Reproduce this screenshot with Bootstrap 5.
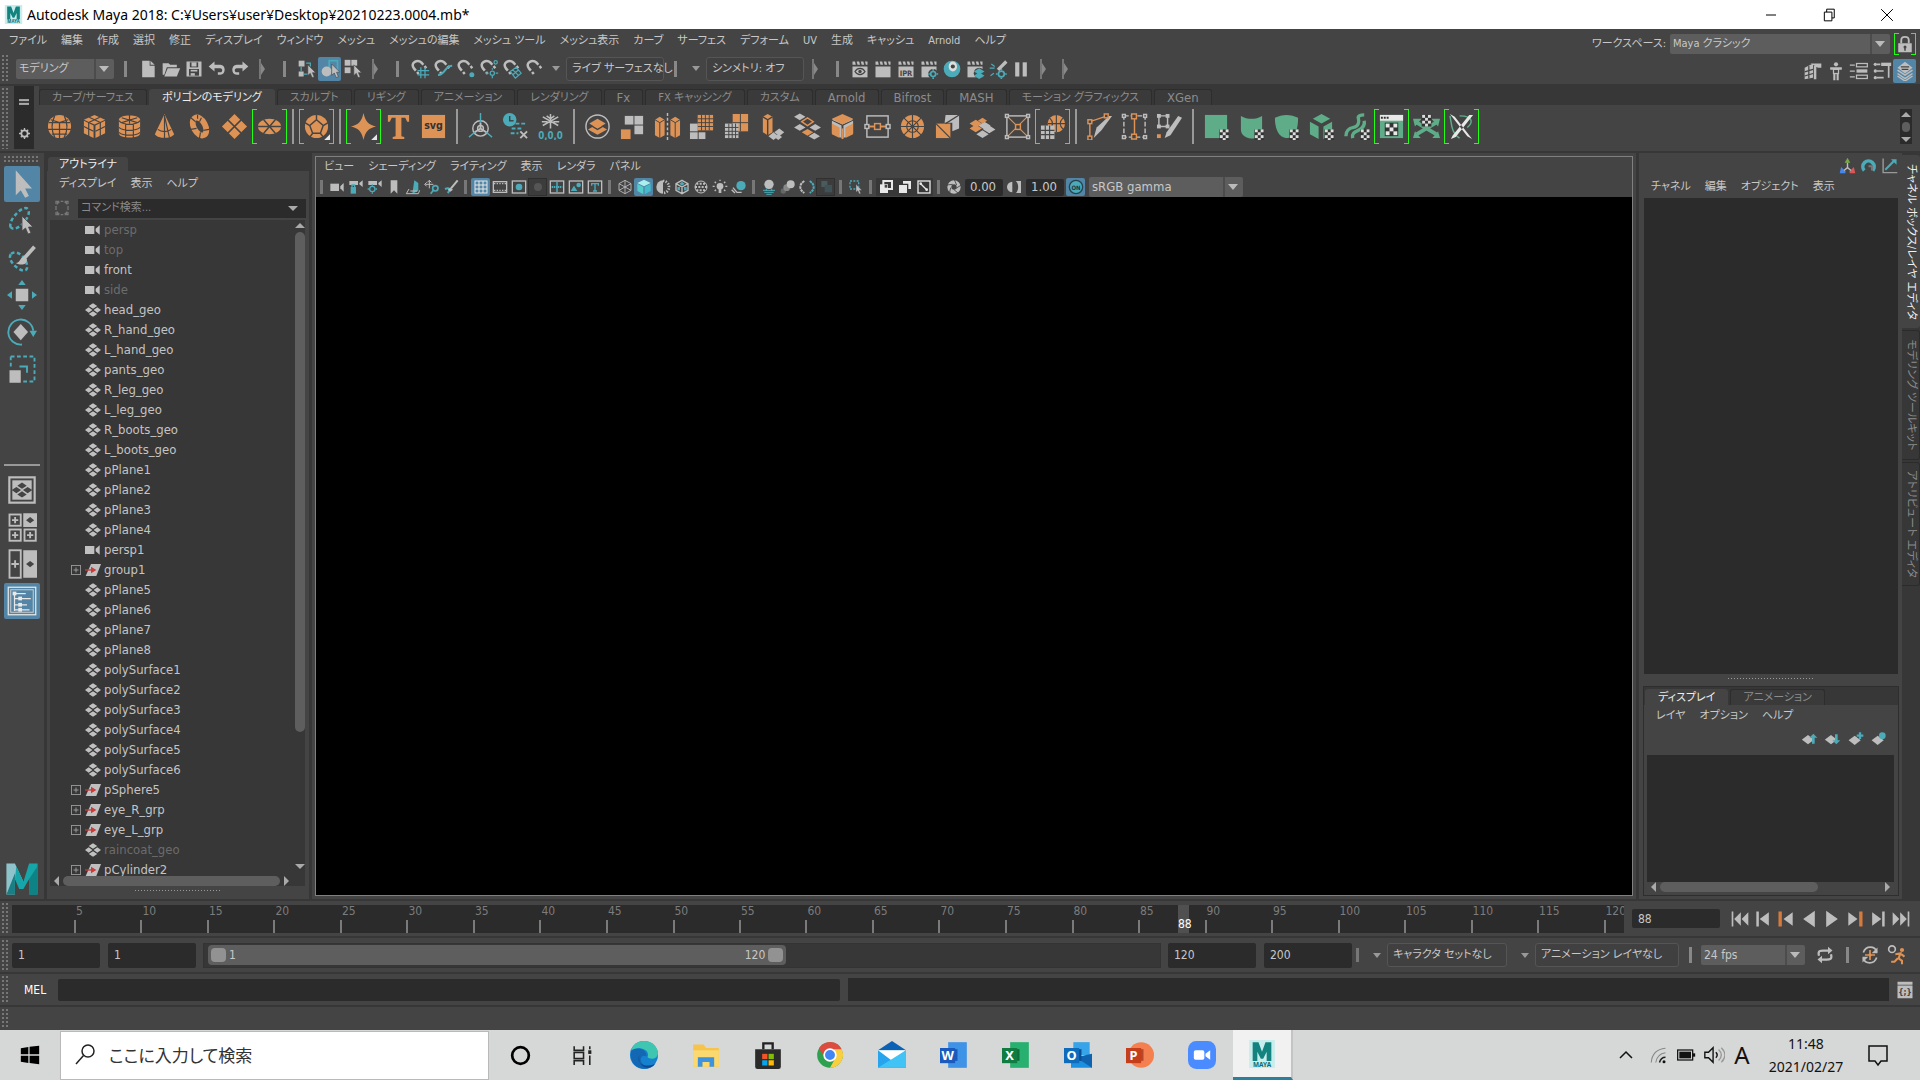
<!DOCTYPE html>
<html lang="ja">
<head>
<meta charset="utf-8">
<meta name="viewport" content="width=device-width, initial-scale=1">
<title>Autodesk Maya 2018</title>
<link rel="stylesheet" href="https://cdn.jsdelivr.net/npm/bootstrap@5.3.0/dist/css/bootstrap.min.css">
<style>
:root{--bg:#444;--dark:#373737;--deep:#2b2b2b;--ctl:#5d5d5d;--blue:#5285a6;--txt:#c8c8c8}
body{font-family:"DejaVu Sans Condensed","Noto Sans","Noto Sans CJK JP",sans-serif;font-size:11px;line-height:20px;color:var(--txt);background:var(--bg);font-feature-settings:"palt";overflow:hidden;white-space:nowrap}
button{background:none;border:0;padding:0;color:inherit;font-feature-settings:inherit;display:inline-flex;align-items:center;justify-content:center;flex:none}
svg{display:block;flex:none}
input,select{font:inherit;font-feature-settings:inherit;color:var(--txt);background:var(--deep);border:0;border-radius:2px;padding:0 6px;min-width:0;outline:0}
a{color:inherit;text-decoration:none}
.en{font-size:13px}
.titlebar{height:29px;background:#fff;color:#000;font-family:"Noto Sans","Noto Sans CJK JP",sans-serif;font-size:14px}
.titlebar button{width:58px;height:29px}
.menus{display:flex;gap:14px;align-items:center}
.mainmenu{height:24px;padding-left:9px}
.statusbar{height:31px}
.line{height:2px;background:var(--dark);flex:none}
.gripv{width:6px;margin:2px 4px 2px 2px;flex:none;background:radial-gradient(circle at 1px 1px,#777 1px,transparent 1px) 0 0/4px 4px}
.griph{height:6px;background:radial-gradient(circle at 1px 1px,#777 1px,transparent 1px) 0 0/4px 4px}
.dots{width:86px;height:1px;background:repeating-linear-gradient(90deg,#999 0 1px,transparent 1px 3px);margin:0 auto}
.pick{position:relative;display:flex;height:20px;background:var(--ctl);border-radius:2px;flex:none}
.pick select{appearance:none;background:none;width:100%;padding:0 22px 0 3px;height:20px;line-height:20px}
.pick::after{content:"";position:absolute;right:5px;top:7px;border:5px solid transparent;border-top:6px solid #bbb;border-bottom:0;pointer-events:none}
.pick::before{content:"";position:absolute;right:18px;top:0;bottom:0;width:2px;background:#4c4c4c}
.w98{width:98px}.w104{width:104px}.w120{width:120px}.w144{width:144px}.w154{width:154px}.w220{width:220px}
.t23{width:23px;height:24px}
.on{background:var(--blue);border-radius:2px}
.sep{width:22px;height:22px;display:flex;justify-content:center;align-items:center;flex:none}
.sep::before{content:"";width:2px;height:20px;background:#777}
.sep.knob::before{width:3px;height:16px;background:#888}
.sep.fold::after{content:"";border:6px solid transparent;border-left:4px solid #888;border-right:0}
.framed{height:24px;border:1px solid #555;background:#404040;border-radius:3px;padding:0 5px;line-height:20px;flex:none;justify-content:flex-start}
.tri{border:4px solid transparent;border-top:5px solid #999;border-bottom:0}
.narrowbtn{width:20px;height:22px}
.lockbtn{width:22px;height:22px}
.brk{position:relative}
.brk::before,.brk::after{content:"";position:absolute;top:0;bottom:0;width:5px;border:1px solid #2f1;pointer-events:none}
.brk::before{left:0;border-right:0}.brk::after{right:0;border-left:0}
.shelf{height:65px;background:var(--bg)}
.shelfside{width:20px;background:var(--deep);flex:none;margin:0 5px 2px 2px}
.shelftabs{height:19px;background:var(--dark);padding-top:3px;gap:2px}
.shelftabs button,.laytabs button{height:16px;padding:0 12px;color:#8c8c8c;border:1px solid #2d2d2d;border-bottom:0;border-radius:3px 3px 0 0;background:#3a3a3a}
.shelftabs button.cur,.laytabs button.cur{background:var(--bg);color:#eee;border-color:var(--bg)}
.shelfrow{height:46px;padding:4px 0 0 3px}
.cell{width:35px;height:35px}
.ssep{width:12px;height:35px;flex:none;display:flex;justify-content:center}
.ssep::before{content:"";width:2px;background:#999}
.shelfscroll{width:12px;height:35px;background:var(--deep);margin:0 8px 0 0}
.toolbox{width:44px;flex:none;padding:3px 4px 3px}
.tool{width:36px;height:36px;margin-bottom:1px}
.layouts{margin-top:76px;border-top:2px solid #999;padding-top:6px}
.vbar{width:3px;background:var(--dark);flex:none}
.outliner{width:262px;flex:none}
.outstrip{background:var(--dark);height:18px;padding:2px 0 0 1px}
.outstrip button{height:16px;width:80px;background:var(--bg);color:#eee;border-radius:3px 3px 0 0}
.panelmenu{height:24px;padding-top:2px}
.finder{padding:4px 0 0 7px}
.find{height:19px;background:var(--deep);width:228px}
.find input{width:100%;height:19px;padding:0 3px}
.find input::placeholder{color:#8a8a8a;opacity:1}
.tree{background:var(--dark);margin:2px 4px 0 3px;min-height:0}
.tree li{height:20px;display:flex;align-items:center;padding-left:21px;color:#c4c4c4;line-height:20px;font-size:13px}
.tree li.off{color:#6c6c6c}
.xp{width:10px;margin-right:4px;flex:none}
.ticon{width:16px;margin-right:3px;flex:none}
.vscroll{width:10px;flex:none;padding:3px 0}
.hthumb,.vthumb{background:#5e5e5e;border-radius:5px}
.hthumb{height:10px}.vthumb{width:10px;height:77%}
.twothird{width:66%}
.up{border:5px solid transparent;border-bottom:5px solid #aaa;border-top:0;width:0;height:0}
.down{border:5px solid transparent;border-top:5px solid #aaa;border-bottom:0;width:0;height:0}
.lf{border:5px solid transparent;border-right:5px solid #aaa;border-left:0;width:0;height:0}
.rt{border:5px solid transparent;border-left:5px solid #aaa;border-right:0;width:0;height:0}
.view{border:1px solid #808080;margin:3px;min-width:0}
.view .menus{height:20px;padding-left:8px}
.vtools{height:20px}
.t19{width:19px;height:18px}
.vsep{width:11px;height:18px;flex:none;display:flex;justify-content:center;align-items:center}
.vsep::before{content:"";width:3px;height:14px;background:#777}
.press{background:#3c3c3c;border:1px solid #303030}
.dk{background:#383838}
.vtools input{width:38px;height:17px;padding:0 5px;margin:0 2px}
.stage{background:#000;flex:1}
.chan{width:263px;flex:none}
.well{background:var(--deep)}
.chanbox{margin:0 4px 0 5px;height:476px}
.lay{border:1px solid #2e2e2e;margin:7px 3px 3px 4px}
.laytabs{height:18px;background:var(--dark);padding:2px 0 0 1px;gap:2px}
.laymenu{height:22px}
.laybody{margin:0 4px 3px 3px}
.sidetabs{width:18px;background:var(--dark);flex:none;gap:2px;padding-top:2px}
.sidetabs button{width:18px;line-height:18px;color:#8c8c8c;border:1px solid #2b2b2b;border-left:0;border-radius:0 3px 3px 0}
.sidetabs button.cur{background:var(--bg);color:#f0f0f0;border-color:var(--bg)}
.sidetabs span{flex:none;transform:rotate(90deg)}
.tall{height:173px}.mid{height:130px}.low{height:124px}
.timerow{height:35px}.rangerow{height:34px}.cmdrow{height:31px}.helprow{height:23px}
.timerow,.rangerow,.cmdrow{font-size:12px}
.times{position:relative;height:28px;background:var(--deep);overflow:hidden;color:#7c7c7c}
.tick{position:absolute;top:15px;bottom:0;width:2px;background:#7a7a7a}
.tlab{position:absolute;top:0;line-height:13px;padding-left:2px}
.now{position:absolute;top:0;bottom:0;width:11px;background:#505050;color:#fff;line-height:38px}
.num{width:88px;height:25px;flex:none}
.num.short{height:19px}
.range{height:25px;background:var(--dark);border:1px solid #333;padding:1px 4px;margin:0 7px}
.rthumb{width:61%;height:20px;background:#5e5e5e;border-radius:4px;padding:0 3px;gap:3px}
.knobb{width:15px;height:14px;border-radius:4px;background:#929292}
.rangerow .framed{font-size:11px}
.mel{width:782px;height:22px}
.taskbar{height:50px;background:#d6d7d7;color:#111;font-family:"Noto Sans","Noto Sans CJK JP",sans-serif}
.winsearch{width:429px;height:49px;background:#fff;border:1px solid #b9b9b9}
.winsearch input{background:none;font-size:17px;color:#333;width:300px;padding:0;height:40px}
.winsearch input::placeholder{color:#333;opacity:1}
.tb{width:62px;height:50px}
.tb.start{width:60px}
.tb.cur{background:#f1f1f1;border-bottom:3px solid #2e7f9b;border-right:2px solid #c4c4c4;width:60px}
.tray{gap:8px}
.tray button{width:20px;height:50px}
.clock{width:92px;text-align:center;font-size:14px;line-height:23px}
</style>
</head>
<body class="d-flex flex-column vh-100">
<header class="titlebar d-flex align-items-center flex-shrink-0">
  <span data-i="maya" data-s="19" class="ms-1 me-1"></span><span>Autodesk Maya 2018: C:¥Users¥user¥Desktop¥20210223.0004.mb*</span>
  <div class="ms-auto d-flex pe-1">
    <button aria-label="最小化" data-i="min" data-s="12"></button><button aria-label="元に戻す" data-i="rest" data-s="14"></button><button aria-label="閉じる" data-i="close" data-s="14"></button>
  </div>
</header>

<div class="d-flex flex-shrink-0">
<div class="flex-grow-1">
<nav class="mainmenu menus"><a href="#">ファイル</a><a href="#">編集</a><a href="#">作成</a><a href="#">選択</a><a href="#">修正</a><a href="#">ディスプレイ</a><a href="#">ウィンドウ</a><a href="#">メッシュ</a><a href="#">メッシュの編集</a><a href="#">メッシュ ツール</a><a href="#">メッシュ表示</a><a href="#">カーブ</a><a href="#">サーフェス</a><a href="#">デフォーム</a><a href="#">UV</a><a href="#">生成</a><a href="#">キャッシュ</a><a href="#">Arnold</a><a href="#">ヘルプ</a></nav>
<div class="statusbar d-flex align-items-center">
  <div class="gripv align-self-stretch"></div>
  <div class="pick w98 ms-1"><select aria-label="メニュー セット"><option>モデリング</option></select></div>
  <span class="sep knob"></span>
  <span class="d-flex" data-row="t23:new,open,save,undo,redo"></span>
  <span class="sep fold"></span><span class="sep knob"></span>
  <span class="d-flex" data-row="t23:selh,selo*,selc"></span>
  <span class="sep fold"></span><span class="sep knob"></span>
  <span class="d-flex" data-row="t23:maggrid,magcurve,magpt,magproj,magplane,maglive"></span>
  <button class="narrowbtn" aria-label="ライブ"><i class="tri"></i></button>
  <button class="framed w98">ライブ サーフェスなし</button>
  <span class="sep knob"></span>
  <button class="narrowbtn" aria-label="シンメトリ"><i class="tri"></i></button>
  <button class="framed w98">シンメトリ: オフ</button>
  <span class="sep fold"></span><span class="sep knob"></span>
  <span class="d-flex" data-row="t23:clapeye,clap,clapipr,clapgear,ball,claplay,dial,pause"></span>
  <span class="sep fold"></span><span class="sep fold"></span>
</div>
</div>
<div class="d-flex flex-column align-items-end pt-1 pe-1">
  <div class="d-flex align-items-center gap-1"><label for="ws">ワークスペース:</label><div class="pick w220"><select id="ws"><option>Maya クラシック</option></select></div><button class="lockbtn brk" aria-label="ロック" data-i="lock" data-s="18"></button></div>
  <div class="d-flex mt-1" data-row="t23:hammer,man,attr,toolset,layers*"></div>
</div>
</div>
<div class="line"></div>

<section class="shelf d-flex flex-shrink-0">
  <div class="gripv"></div>
  <div class="shelfside d-flex flex-column align-items-center justify-content-around"><button aria-label="シェルフ メニュー" data-i="burger" data-s="10"></button><button aria-label="シェルフ設定" data-i="gear" data-s="11"></button></div>
  <div class="flex-grow-1">
    <div class="shelftabs d-flex"><button>カーブ/サーフェス</button><button class="cur">ポリゴンのモデリング</button><button>スカルプト</button><button>リギング</button><button>アニメーション</button><button>レンダリング</button><button class="en">Fx</button><button>FX キャッシング</button><button>カスタム</button><button class="en">Arnold</button><button class="en">Bifrost</button><button class="en">MASH</button><button>モーション グラフィックス</button><button class="en">XGen</button></div>
    <div class="shelfrow d-flex">
      <div class="d-flex" id="shelf"></div>
      <div class="shelfscroll ms-auto d-flex flex-column align-items-center justify-content-around"><i class="up"></i><i class="hthumb p-1"></i><i class="down"></i></div>
    </div>
  </div>
</section>
<div class="line"></div>

<main class="d-flex flex-grow-1 overflow-hidden">
  <aside class="toolbox d-flex flex-column">
    <div class="griph mb-1"></div>
    <div class="d-flex flex-column" data-row="tool:select*,lasso,paint,move,rotate,scale"></div>
    <div class="layouts d-flex flex-column" data-row="tool:lay1,lay2,lay3,lay4*"></div>
    <div class="mt-auto d-flex justify-content-center" data-i="m" data-s="34"></div>
  </aside>
  <div class="vbar"></div>
  <section class="outliner d-flex flex-column">
    <div class="outstrip"><button>アウトライナ</button></div>
    <nav class="menus panelmenu ps-2 ms-1"><a href="#">ディスプレイ</a><a href="#">表示</a><a href="#">ヘルプ</a></nav>
    <div class="finder d-flex align-items-center"><span data-i="filter" data-s="16" class="me-2"></span><div class="find d-flex align-items-center"><input aria-label="コマンド検索" placeholder="コマンド検索..."><i class="down me-2"></i></div></div>
    <div class="tree d-flex flex-column flex-grow-1">
      <div class="d-flex flex-grow-1 overflow-hidden"><ul class="list-unstyled mb-0 flex-grow-1" id="tree"></ul>
        <div class="vscroll d-flex flex-column gap-1"><i class="up"></i><div class="vthumb"></div><i class="down mt-auto mb-1"></i></div></div>
      <div class="d-flex align-items-center gap-1 ps-1 pe-3"><i class="lf"></i><div class="hthumb flex-grow-1"></div><i class="rt"></i></div>
    </div>
    <div class="dots mt-1 mb-2"></div>
  </section>
  <div class="vbar"></div>
  <section class="view d-flex flex-column flex-grow-1">
    <nav class="menus"><a href="#">ビュー</a><a href="#">シェーディング</a><a href="#">ライティング</a><a href="#">表示</a><a href="#">レンダラ</a><a href="#">パネル</a></nav>
    <div class="vtools d-flex align-items-center">
      <span class="vsep"></span><span class="d-flex" data-row="t19:cam,camlock,camgear,bookmark,imgplane,panzoom,grease"></span>
      <span class="vsep"></span><span class="d-flex" data-row="t19:grid*,film,res,mask!,field,safe,title"></span>
      <span class="vsep"></span><span class="d-flex" data-row="t19:wire,shaded*,deflt,wsh,texd,bulb,shadow"></span>
      <span class="vsep"></span><span class="d-flex" data-row="t19:ao,mblur,aa,dof!"></span>
      <span class="vsep"></span><span class="d-flex" data-row="t19:isol"></span>
      <span class="vsep"></span><span class="d-flex" data-row="t19:xray,xray2,xjoint"></span>
      <span class="vsep"></span><button class="t19" aria-label="露出" data-i="aperture" data-s="16"></button><input class="en" aria-label="露出値" value="0.00">
      <button class="t19" aria-label="ガンマ" data-i="gamma" data-s="16"></button><input class="en" aria-label="ガンマ値" value="1.00">
      <button class="t19 on" aria-label="カラー管理" data-i="onb" data-s="16"></button><div class="pick w154 ms-1"><select class="en" aria-label="ビュー変換"><option>sRGB gamma</option></select></div>
    </div>
    <div class="stage"></div>
  </section>
  <div class="vbar"></div>
  <aside class="chan d-flex flex-column">
    <div class="d-flex justify-content-end pt-1 pe-1 gap-1"><button aria-label="軸" data-i="axis" data-s="17"></button><button aria-label="速度" data-i="speedo" data-s="17"></button><button aria-label="グラフ" data-i="graph" data-s="17"></button></div>
    <nav class="menus panelmenu ms-2 ps-1"><a href="#">チャネル</a><a href="#">編集</a><a href="#">オブジェクト</a><a href="#">表示</a></nav>
    <div class="well chanbox"></div>
    <div class="dots mt-1"></div>
    <div class="lay d-flex flex-column flex-grow-1">
      <div class="laytabs d-flex"><button class="cur">ディスプレイ</button><button>アニメーション</button></div>
      <nav class="menus laymenu ps-2 ms-1"><a href="#">レイヤ</a><a href="#">オプション</a><a href="#">ヘルプ</a></nav>
      <div class="d-flex justify-content-end pe-2 pb-1" data-row="lt:layup,laydown,layadd,laysel"></div>
      <div class="laybody d-flex flex-column flex-grow-1"><div class="well flex-grow-1"></div><div class="d-flex align-items-center gap-1 p-1 py-0"><i class="lf"></i><div class="hthumb twothird me-auto"></div><i class="rt"></i></div></div>
    </div>
  </aside>
  <div class="sidetabs d-flex flex-column"><button class="cur tall"><span>チャネル ボックス/レイヤ エディタ</span></button><button class="mid"><span>モデリング ツールキット</span></button><button class="low"><span>アトリビュート エディタ</span></button></div>
</main>

<div class="line"></div>
<section class="timerow d-flex align-items-center flex-shrink-0">
  <div class="gripv align-self-stretch"></div>
  <div class="times flex-grow-1" id="times"></div>
  <input class="num short ms-2" aria-label="現在のフレーム" value="88">
  <div class="d-flex ms-2 me-2" data-row="t23:p1,p2,p3,p4,p5,p6,p7,p8"></div>
</section>
<div class="line"></div>
<section class="rangerow d-flex align-items-center flex-shrink-0 pe-1">
  <div class="gripv align-self-stretch me-1"></div>
  <input class="num me-2" aria-label="開始" value="1"><input class="num" aria-label="再生開始" value="1">
  <div class="range flex-grow-1"><div class="rthumb d-flex align-items-center"><i class="knobb"></i><span>1</span><span class="ms-auto">120</span><i class="knobb"></i></div></div>
  <input class="num me-2" aria-label="再生終了" value="120"><input class="num" aria-label="終了" value="200">
  <span class="vsep"></span>
  <button class="narrowbtn ms-1" aria-label="キャラクタ"><i class="tri"></i></button><button class="framed w120 me-2">キャラクタ セットなし</button>
  <button class="narrowbtn" aria-label="レイヤ"><i class="tri"></i></button><button class="framed w144">アニメーション レイヤなし</button>
  <span class="sep knob"></span>
  <div class="pick w104"><select aria-label="フレームレート"><option>24 fps</option></select></div>
  <button class="t23 ms-2" aria-label="ループ" data-i="loop" data-s="18"></button><span class="sep knob"></span>
  <button class="t23 me-1" aria-label="自動キー" data-i="autokey" data-s="20"></button><button class="t23 me-2" aria-label="プリファレンス" data-i="runner" data-s="20"></button>
</section>
<div class="line"></div>
<section class="cmdrow d-flex align-items-center flex-shrink-0">
  <div class="gripv align-self-stretch me-3"></div>
  <label for="mel" class="me-2 text-white">MEL</label><input id="mel" class="mel ms-1">
  <div class="well flex-grow-1 ms-2 h-75"></div>
  <button class="t23 mx-1" aria-label="スクリプト エディタ" data-i="script" data-s="18"></button>
</section>
<div class="line"></div>
<div class="helprow d-flex flex-shrink-0"><div class="gripv"></div></div>

<footer class="taskbar d-flex align-items-center flex-shrink-0">
  <button class="tb start" aria-label="スタート" data-i="win" data-s="20"></button>
  <div class="winsearch d-flex align-items-center ps-2"><span data-i="search" data-s="24" class="ms-1 me-2"></span><input class="ms-1" aria-label="検索" placeholder="ここに入力して検索"></div>
  <div class="d-flex" data-row="tb:cortana,task,edge,folder,store,chrome,mail,word,excel,outlook,ppt,zoom,maya*"></div>
  <div class="tray d-flex align-items-center ms-auto pe-2">
    <button aria-label="隠れているインジケーター" data-i="chev" data-s="18"></button><button class="ms-1" aria-label="Wi-Fi" data-i="wifi" data-s="18"></button><button aria-label="バッテリー" data-i="batt" data-s="20"></button><button aria-label="音量" data-i="vol" data-s="22"></button><button class="fs-4" aria-label="入力モード">A</button>
    <div class="clock">11:48<br>2021/02/27</div>
    <button class="ms-2 me-4" aria-label="通知" data-i="note" data-s="24"></button>
  </div>
</footer>

<script>
// Small colour names keep the drawings short
const G='#bdbdbd',T='#4babb9',O='#dd9256',E='#5fad88',B='#444';
const p=(d,f,x='')=>`<path d="${d}" fill="${f}" ${x}/>`;
const s=(d,c,w=1.5,x='')=>`<path d="${d}" fill="none" stroke="${c}" stroke-width="${w}" ${x}/>`;
const c=(x,y,r,f,st='none',w=1.5)=>`<circle cx="${x}" cy="${y}" r="${r}" fill="${f}" stroke="${st}" stroke-width="${w}"/>`;
const r=(x,y,w,h,f,st='none',q=1.5)=>`<rect x="${x}" y="${y}" width="${w}" height="${h}" fill="${f}" stroke="${st}" stroke-width="${q}"/>`;
const t=(x,y,z,f,v,w='bold')=>`<text x="${x}" y="${y}" font-size="${z}" fill="${f}" font-weight="${w}" text-anchor="middle">${v}</text>`;
const cur=(x,y,k=1)=>`<path transform="translate(${x} ${y}) scale(${k})" d="M0 0V15L3.5 12 6 18 9 17 6.500 11H11Z" fill="${G}" stroke="${B}" stroke-width=".8"/>`;
const mag=(f='')=>s('M7 14 4.500 11C0 4 9 0 14 4.500L16 7M8.500 15.500 10.500 18M17.500 8.500 19.500 11',G,3)+f;
const clap=f=>r(3,9,18,13,G)+p('M3 3h3l1 4H3zM8 3h3l1 4H9zM13 3h3l1 4h-3zM18 3h3v4h-2z',G)+f;
const chk=(x,y)=>r(x,y,10,12,'#333')+[[0,0],[6,0],[3,3],[0,6],[6,6],[3,9]].map(a=>r(x+a[0]+.5,y+a[1],3,3,'#ddd')).join('');
const cube=(f,l)=>p('M14 2 25 7 14 12 3 7zM3 8l10 5v13L3 21zM25 8l-10 5v13l10-5z',f)+(l||'');
const gearT=(x,y,k,q)=>c(x,y,k,'none',q,2)+s(`M${x} ${y-k-3}v2M${x} ${y+k+1}v2M${x-k-3} ${y}h2M${x+k+1} ${y}h2`,q,2);
const dia=(x,y,k,f,w=1.3)=>p(`M${x} ${y-k}L${x+k*w} ${y}L${x} ${y+k}L${x-k*w} ${y}Z`,f);
const office=(a,b,d,l,round)=>(round?c(13,12,11,b):r(7,1,16,22,b))+r(7,7,8,10,d)+r(0,6,13,13,a)+t(6.500,16.500,11,'#fff',l);
const L='#e8e8e8';
// Every glyph is drawn on a 24-unit square unless it is listed in the 28-unit set
const I={
min:s('M2 12h20',"#000",2),rest:s('M4 7h13v15H4zM8 7V2h13v15h-4','#000',1.700),close:s('M2 2 22 22M22 2 2 22','#000',1.700),
maya:r(1,0,22,24,'#c9ecec')+p('M4 2h5l3 8 3-8h5v16h-4v-8l-3 6h-2l-3-6v8H4z','#12837f')+t(12,23,5.500,'#0c6b6b','MAYA'),
m:p('M1 1 7 1 13 14 12 18 7 12V23H1Z','#8fc3cb')+p('M1 23 7 8V23Z','#1a7f84')+p('M17 1H23V23H17V12L13 19H10L7 12 8 3 13 14Z','#16a5a8')+p('M17 12 23 3V23H17Z','#0d8386'),
new:p('M5 2h9v6h6v14H5zM15 2l5 5h-5z',G),open:p('M2 5h7l2 2h8v3H7L4 19H2z',G)+p('M8 11h15l-4 10H4z',G),save:p('M3 3h18v18H3z',G)+r(7,4,10,6,B)+r(9,4,6,5,G)+r(6,12,12,8,B)+r(8,13,8,2,G)+r(8,17,5,3,G),
undo:p('M2 9 9 3v4h7c7 0 7 12 0 12h-3v-3h3c3 0 3-5 0-5H9v4z',G),redo:p('M22 9 15 3v4H8C1 7 1 19 8 19h3v-3H8c-3 0-3-5 0-5h7v4z',G),
selh:r(2,2,7,7,G)+r(2,15,6,6,G)+s('M5 9v6M11 5h5v4M8 18h5',T,1.500)+cur(13,7,.85),selo:r(11,2,10,11,'none',T,2)+c(8,15,6,G)+cur(14,6,.9),selc:r(2,1,7,7,G)+r(10,1,7,7,G)+r(2,10,7,7,G)+cur(13,7,.85),
maggrid:mag(s('M9 14h14M9 19h14M13 10v13M18 10v13',T)),magcurve:mag(s('M6 19C14 20 14 8 23 8',T,2.500)),magpt:mag(c(19,19,3,T)),magproj:mag(c(20,4,2,'none',T)+c(16,17,2.500,'none',T)+s('M16 11v2M8 17h3M20 17h3M16 20v3',T)),magplane:mag(s('M10 15l7-5 6 7-7 6zM13 13l7 7M13 19l7-6',T)),maglive:mag(),
clapeye:clap(s('M6 15c3-5 9-5 12 0-3 5-9 5-12 0z',B)+c(12,15,2,B)),clap:clap(''),clapipr:clap(t(12,20,9,B,'IPR')),clapgear:clap(c(17,18,6,B)+gearT(17,18,3,T)),ball:c(12,12,10,T)+`<ellipse cx="13" cy="9" rx="5" ry="6" fill="#ddd"/>`+c(13,9,2.500,'#444'),claplay:clap(c(17,17,6.500,B)+dia(17,20,4,T,1.600)+dia(17,15,4,T,1.600)),dial:gearT(16,18,3.500,T)+s('M2 11h6M3 20l4-3M4 6l4 3',T)+s('M12 13 22 3',G,4),pause:r(5,4,5,17,G)+r(14,4,5,17,G),
lock:s('M7 11V7c0-6 10-6 10 0v4',G,2.500)+r(3,11,18,12,G)+c(12,16,2,B)+r(11,16,2,5,B),
hammer:p('M2 8 12 3v17l-10 2zM13 6h3v16h-3zM9 3h13v5h-4z',G)+s('M7 6v15M2 13l10-3M2 18l10-3',B),man:c(12,4,2.500,G)+s('M5 9h14',G,3)+r(9,10,6,5,'none',G)+s('M10 15v8M14 15v8',G,2.500),attr:s('M1 5h6M1 12h6M1 19h6',G)+r(9,3,13,4,'none',G)+r(9,10,13,4,G)+r(9,17,13,4,'none',G),toolset:c(4,4,2,G)+c(4,12,2,G)+c(4,20,2,G)+s('M6 4h4M6 12h8M6 20h8M20 5v15',G,2)+p('M11 2h12v4H11z',G),layers:dia(12,8,7,G)+s('M3 11l9 6 9-6M3 15l9 6 9-6M3 18l9 6 9-6',G,1.800)+s('M7 7h10M8 10h8',B),
burger:r(0,5,24,5,'#aaa')+r(0,14,24,5,'#aaa'),gear:c(12,12,7,'none',G,4)+s('M12 0v5M12 19v5M0 12h5M19 12h5M4 4l3 3M17 17l3 3M20 4l-3 3M7 17l-3 3',G,3),
filter:s('M3 6V2h5M16 2h5v4M21 18v4h-5M8 22H3v-4M3 9v6M21 9v6M10 2h4M10 22h4','#777',2)+p('M4 3h5L4 8zM20 3h-5l5 5zM4 21h5l-5-5zM20 21h-5l5-5z','#777'),
select:p('M7 1V21L11 17 14.500 23 17.500 21.500 14.500 15.500H20Z',G),lasso:s('M3 17C0 12 14-3 17 3S7 22 3 17',T,2,'stroke-dasharray="3 2"')+cur(12,8,.8),paint:s('M3 9C-1 15 15 27 16 20S8 4 3 9',T,2,'stroke-dasharray="3 2"')+s('M14 12 22 3',G,3)+p('M7 16c4 0 3-5 7-5l2 2c0 5-5 5-9 3z',G),
move:r(7,7,10,10,G)+p('M12 0 15 4H9zM12 24 15 20H9zM0 12 4 9v6zM24 12 20 9v6z',T),rotate:s('M12 22A10 10 0 1 1 21 11',T,1.500)+p('M18 11h6l-3 5z',T)+dia(11,12,6.500,G,.9),scale:s('M3 2H22V22H12M3 2V12',T,1.500,'stroke-dasharray="3 2"')+s('M10 10h6v5',T)+r(2,13,9,10,G),
lay1:r(1,1,22,22,G)+r(3.500,3.500,17,17,'none',B)+dia(12,8.500,2.500,B,1.500)+dia(12,15.500,2.500,B,1.500)+dia(7.500,12,2.500,B,1.500)+dia(16.500,12,2.500,B,1.500),
lay2:r(2,2,9,9,'none',G)+r(13,1,11,11,G)+dia(18.500,6.500,2.500,B)+r(2,14,9,9,'none',G)+r(14,14,9,9,'none',G)+s('M6.500 4v5M4 6.500h5M6.500 16v5M4 18.500h5M18.500 16v5M16 18.500h5',G),
lay3:r(2,1,9,22,'none',G)+r(13,1,11,22,G)+s('M6.500 9v6M3.500 12h6',G)+dia(18.500,12,2.500,B),
lay4:r(1,1,22,22,'none',L,1)+r(3,3,18,18,'none','#ccc',.8)+s('M6 6v14M6 6h9M6 10h13M6 15h10M6 19h12',L,1)+r(4.500,4.500,3,3,L)+r(9,8.500,3,3,L)+r(9,13.500,3,3,L)+r(9,17.500,3,3,L),
camI:r(0,6,14,12,'#c0c0c0')+p('M22 5v14l-6-5v-4z','#c0c0c0'),meshI:dia(12,6,4,'#c0c0c0',1.600)+dia(12,18,4,'#c0c0c0',1.600)+dia(5.500,12,4,'#c0c0c0',1.400)+dia(18.500,12,4,'#c0c0c0',1.400),grpI:p('M9 3h15l-7 18H1z','#c0c0c0')+s('M0 12h10','#c83c3c',2)+p('M9 7l8 5-8 5z','#c83c3c'),
plus:r(1,1,22,22,'none','#999',2.400)+s('M12 6v12M6 12h12','#999',2.400),
cam:r(2,7,13,11,G)+p('M22 6v13l-5-5v-3z',G),camlock:p('M2 3h13v6H2zM22 2v10l-5-4V6z',G)+r(4,12,8,10,T)+s('M6 12V9h4v3',T,2),camgear:p('M2 3h13v6H2zM22 2v10l-5-4V6z',G)+gearT(8,15,4,T),bookmark:p('M7 2h10v20l-5-5-5 5z',G),imgplane:p('M14 2l6 4v12l-9 4z',T)+s('M6 15l-4 7h18l2-5M8 18h10',G),panzoom:s('M2 8h12M8 2v12M5 5l3-3 3 3M4 5L1 8l3 3',G)+c(17,14,4,'none',T,2.500)+s('M14 17l-4 5',T,2.500),grease:s('M22 2 12 14',G,3)+s('M3 15c7-3 9 1 4 6',T,3)+dia(11,16,3,G),
grid:r(3,3,18,18,'none',L)+s('M3 9h18M3 15h18M9 3v18M15 3v18',L),film:r(2,4,20,16,'none',G,2)+s('M3 7h18M3 17h18',G,2,'stroke-dasharray="2 2"'),res:r(2,3,20,18,'none',G,2)+c(12,12,5,T),mask:c(12,12,6,'#555'),field:r(2,3,20,18,'none',G,2)+s('M12 5v14M4 12h16',T,3,'stroke-dasharray="2 1"'),safe:r(2,3,20,18,'none',G,2)+c(16,9,3.500,T)+p('M4 18l5-8 5 8z',T),title:r(2,3,20,18,'none',G,2)+p('M6 6h12v4h-2V8h-3v9h2v2H9v-2h2V8H8v2H6z',T),
wire:s('M12 2 21 7v10l-9 5-9-5V7zM3 7l9 5 9-5M12 12v10M12 2v10M3 17l9-5 9 5',G,1.300),shaded:p('M12 1 22 6 12 11 2 6z','#aee')+p('M2 7l9 5v11l-9-5z','#5cc')+p('M22 7l-9 5v11l9-5z','#4bc'),deflt:p('M12 2a10 10 0 0 0 0 20z',G)+s('M12 3a9 9 0 0 1 0 18',G,4,'stroke-dasharray="2 2"'),wsh:s('M12 2 21 7v10l-9 5-9-5V7zM3 7l9 5 9-5M12 12v10',G,2)+dia(12,7,3,T)+r(5,12,4,5,T)+r(15,12,4,5,T),texd:c(12,12,9,'none',G)+s('M5 7h14M3 12h18M5 17h14',G,3,'stroke-dasharray="3 2"'),bulb:c(12,11,5,G)+r(10,15,4,6,G)+s('M1 11h3M20 11h3M4 4l2 2M20 4l-2 2M12 1v2M4 18l2-2M20 18l-2-2',G,2),shadow:c(15,10,7,T)+s('M3 13l6 7h7M1 16l5 5',G,2),
ao:c(12,8,7,G)+s('M3 17h18M5 20h14M8 23h8M8 14v4M16 14v4',T),mblur:c(5,18,4,'#666')+c(10,13,5,'#888')+c(16,8,6,G),aa:s('M8 3C0 8 0 16 8 21',G,3,'stroke-dasharray="4 1"')+s('M16 3c8 5 8 13 0 18',T,3,'stroke-dasharray="4 1"'),dof:r(5,3,9,9,'#4b5a5d')+r(10,9,11,11,'#3f5357'),isol:r(3,3,13,12,'none',T,2).replace('/>',' stroke-dasharray="3 2"/>')+cur(12,8,.8),
xray:r(8,3,13,12,'none',L,3)+r(3,8,12,13,L)+r(10,9,4,4,B),xray2:p('M9 3h12v12h-4V7H9z',L)+r(3,9,12,12,L),xjoint:r(3,3,18,18,'none',L,2)+s('M7 7 16 16',L,2)+c(7,7,2,L)+c(16,16,2,L),
aperture:c(12,12,7,'none',G,6)+s('M12 0l4 9M23 9l-8 5M19 22l-7-6M5 22l2-9M1 9l9-1',B,1.300),gamma:p('M13 3h8v18h-8c5-3 5-15 0-18z',G)+p('M8 4a8 8 0 0 0 0 16z',G),onb:c(12,12,10,T,'#27424f',2)+t(12,16,9,'#234','ON'),
axis:p('M12 1l4 7H8z','#7a4')+p('M1 23l2-9 6 6v3z','#48e')+p('M23 23l-2-9-6 6v3z','#d55')+s('M12 8v7l-5 4M12 15l5 4',G,2),speedo:s('M6 19A8 8 0 1 1 18 19',T,5)+s('M12 13h5v6','#777',3),graph:s('M3 2v20h20','#999',2)+s('M6 18 19 5',T,3)+p('M14 3h8v8z',T),
layup:dia(9,13,7,G)+p('M17 4l6 6h-4v9h-4v-9h-4z',T),laydown:dia(9,13,7,G)+p('M17 20l6-6h-4V5h-4v9h-4z',T),layadd:dia(10,14,7,G)+s('M18 2v10M13 7h10',T,3.500),laysel:dia(10,14,7,G)+c(17,7,5,T),
p1:p('M2 3h2v18H2zM13 4v16l-8-8zM22 4v16l-8-8z',G),p2:p('M4 3h3v18H4zM19 4v16L8 12z',G),p3:r(3,3,4,18,'#d77b3d')+p('M20 4v16L9 12z',G),p4:p('M19 2v20L5 12z',G),p5:p('M5 2v20l14-10z',G),p6:r(17,3,4,18,'#d77b3d')+p('M4 4v16l11-8z',G),p7:p('M17 3h3v18h-3zM5 4v16l11-8z',G),p8:p('M20 3h2v18h-2zM11 4v16l8-8zM2 4v16l8-8z',G),
loop:s('M4 13c-2-7 2-7 6-7h8M20 11c2 7-2 7-6 7H6',G,3)+p('M16 1l6 5-6 5zM8 13l-6 5 6 5z',G),autokey:s('M4 9C7 0 18 1 20 8M20 15C17 24 6 23 4 16',G,2)+p('M21 3v7h-7zM3 21v-7h7z',G)+s('M6 12h12M12 6v12',O,2)+c(12,12,2,O),runner:c(6,5,4,'none',G,2)+c(18,6,2.500,O)+s('M10 11l6-1-2 6 4 3v4M13 16l-4 4H5M17 11l4 3',O,2.500),
script:r(2,1,20,4,G)+r(2,6,20,17,G)+t(12,18,11,B,'{;}'),
win:p('M1 4l9-1.500V11H1zM11.500 2.200 23 1v10H11.500zM1 13h9v8.500L1 20zM11.500 13H23v10l-11.500-1.500z','#000'),search:c(15,8,6,'none','#222')+s('M10.500 12.500 3 21','#222'),
cortana:c(12,12,8,'none','#000',2.600),task:s('M4 3v4h9V3M4 21v-4h9v4M4 9h9v6H4zM19 3v3M19 12v9','#222',1.500)+r(17.500,7,3,3.500,'#222'),
edge:c(12,12,12,'#1681cf')+p('M1 8C4-3 22-3 24 10c0 6-7 6-9 4 3-7-8-10-14-6z','#3fc6b0')+p('M1 9c4-5 14-2 13 4-4-2-7 3-3 7 4 3 8 1 11-1-6 9-24 5-21-10z','#1467b3')+p('M8 12c-3 7 4 11 13 8-3 5-15 4-13-8z','#0c4b93'),
folder:p('M1 3h9l2 3h11v16H1z','#f6c44c')+r(1,8,22,14,'#fbd970')+p('M5 22v-8h14v8h-4v-4H9v4z','#3d93dd'),store:s('M8 7V2h8v5','#222',2)+p('M1 7h22v15q0 2-2 2H3q-2 0-2-2z','#2b2b2b')+r(7,11,4.500,4.500,'#f35325')+r(12.500,11,4.500,4.500,'#81bc06')+r(7,16.500,4.500,4.500,'#05a6f0')+r(12.500,16.500,4.500,4.500,'#ffba08'),
chrome:c(12,12,11,'#2da14d')+p('M2.500 6.500A11 11 0 0 1 22 7H12l-4 8z','#dd4b3e')+p('M22 7A11 11 0 0 1 12 23l5-9-2-7z','#f9cf40')+c(12,12,5,'#4285f4','#fff',1.500),
mail:p('M0 8 12 0l12 8z','#0b62b5')+r(0,8,24,15,'#26a5ee')+p('M0 8h24L12 17z','#fff')+p('M0 23 24 8v15z','#41c4f5'),
word:office('#1b5abd','#3f93e6','#185abd','W'),excel:office('#107c41','#28b070','#0f6e3b','X'),outlook:p('M8 1h14v11H8z','#37a3e8')+p('M6 11l9 5 9-5v12H6z','#1b8fe0')+p('M24 11v12L10 14z','#0f63ae')+r(7,7,8,10,'#0a4f93')+r(0,6,13,13,'#0f6cbd')+t(6.500,16.500,11,'#fff','O'),ppt:office('#c43e1c','#f4804f','#b7472a','P',1),
zoom:`<rect x="0" y="0" width="24" height="24" rx="7" fill="#4a8cff"/><rect x="5" y="8" width="9" height="8" rx="1.500" fill="#fff"/>`+p('M15 11l4-3v8l-4-3z','#fff'),
chev:s('M4 16l8-8 8 8','#111',2),wifi:s('M3 22C4 10 12 4 22 3M9 22c1-7 6-12 13-13','#888')+s('M14 22c1-4 4-7 8-7','#222',2)+c(20,21,2,'#111'),batt:r(2,6,18,12,'none','#111')+r(4,8,14,8,'#111')+r(20,10,3,4,'#111'),vol:s('M2 9h4l5-5v16l-5-5H2z','#111')+s('M14 9c2 2 2 4 0 6','#111')+s('M17 6c4 4 4 8 0 12M20 4c5 5 5 11 0 16','#999'),note:s('M3 3h18v15h-6l-3 4-3-4H3z','#111',1.500)
};
const K={
sphere:c(14,14,12,O)+s('M3 10h22M2 17h24M6 22h16M9 3c-4 8-4 14 0 22M19 3c4 8 4 14 0 22M14 10v16M5 7l9 3 9-3',B,1.300),cube:cube(O,s('M8.500 4.500l11 5M19.500 4.500l-11 5M3 14l10 5M15 19l10-5M8 10v14M20 10v14',B,1.200)),cyl:p('M3 7c0-6 22-6 22 0v14c0 6-22 6-22 0z',O)+s('M3 8c4 5 18 5 22 0M3 15c4 4 18 4 22 0M3 20c4 4 18 4 22 0M10 11v15M18 11v15M14 2v9M6 5l16 5M22 5 6 10',B,1.200),cone:p('M14 1 24 22c-3 5-17 5-20 0z',O)+s('M14 2v24M7 17c4 3 10 3 14 0M14 3l5 22',B,1.200),torus:`<ellipse cx="14" cy="14" rx="6" ry="10" transform="rotate(-28 14 14)" fill="none" stroke="${O}" stroke-width="6"/>`+s('M5 5l5 4M16 5l-2 4M5 17l6-1M14 26l1-6M24 17l-6 1M12 2v4',B,1.200),plane:dia(14,14,13,O,1)+s('M7 7l14 14M21 7 7 21',B,1.800),disc:`<ellipse cx="14" cy="14" rx="12" ry="8" fill="${O}"/>`+s('M2 14h24M8 7l12 14M20 7 8 21',B,1.500),
platonic:c(14,14,12,O)+s('M14 7l7 6-3 8h-8l-3-8zM14 7V2M21 13l5-3M18 21l3 4M10 21l-3 4M7 13l-5-3',B,1.500),star:p('M14 0c2 9 5 12 13 14-8 2-11 5-13 14-2-9-5-12-13-14 8-2 11-5 13-14z',O),type:p('M3 2h22v7h-2l-2-4h-4v19l3 1v2H8v-2l3-1V5H7L5 9H3z',O),svg:r(2,2,24,24,O)+t(14,17,11,'#333','svg'),
xf:c(14,16,8,'none',G)+c(14,16,3,'none',G)+s('M14 0v10M8 20l-6 5M20 20l6 5',T,1.500)+s('M14 16l-6 4M14 16l6 4M14 10v6',G,2),hist:c(8,7,7,T)+s('M8 3v5h4',B)+s('M14 11h10M10 16h12M9 21h8',T,2,'stroke-dasharray="4 2"')+s('M19 19l7 7M26 19l-7 7',G,2),freeze:s('M14 1v15M6 4l16 9M22 4 6 13M10 3l4 3 4-3M5 9h6M17 9h6',G,1.600)+t(14,27,10,T,'0,0,0'),
comb:c(14,14,12,'none',G)+dia(14,17,5.500,O,1.800)+s('M4 11l10 6 10-6',B,1.500)+dia(14,11,5,O,1.700),sepa:r(6,3,9,9,G)+r(16,3,9,9,G)+r(16,13,9,9,G)+r(2,17,10,10,O),mirror:p('M1 7l5-3 5 3v16l-5 3-5-3zM17 7l5-3 5 3v16l-5 3-5-3z',O)+s('M14 0v28',G,1.500,'stroke-dasharray="3 2"')+s('M1 7l5 3 5-3M6 10v16M17 7l5 3 5-3M22 10v16',B,1),smooth:r(9,2,16,16,O)+s('M13 2v16M17 2v16M21 2v16M9 6h16M9 10h16M9 14h16',B,1)+r(1,11,8,8,G)+r(1,20,8,7,G)+r(10,20,7,7,G),reduce:r(9,1,16,18,O)+s('M17 1v18M9 10h16',B,1)+r(1,11,14,15,G)+s('M5 11v15M8.500 11v15M12 11v15M1 15h14M1 19h14M1 22.500h14',B,1),extr:p('M4 4l5-3 5 3v16l-5 3-5-3z',O)+s('M4 4l5 3 5-3M9 7v16',B)+dia(21,20,4,G)+dia(15,24,4,G)+dia(20,25,3,G),bridge:dia(6,4,3.500,G,1.700)+dia(6,15,3.500,G,1.700)+dia(22,15,3.500,G,1.700)+dia(21,24,3.500,G,1.700)+s('M8 9l6-4 6 4-6 4z',O)+dia(14,20,3.500,O,1.700),bevel:cube(G)+p('M14 1 25 6 14 12 3 6zM3 11l8 4v11L3 22zM25 11l-8 4v11l8-4z',O)+s('M14 16v11',O,2),conn:r(3,3,22,22,'none',G)+s('M4 14h20',O,2)+r(11,11,6,6,B,O)+r(1,12,4,4,B,G)+r(23,12,4,4,B,G),quad:c(14,14,12,O)+c(14,14,6,'none',B,1.200)+s('M2 14h24M14 2v24M5 5l18 18M23 5 5 23',B,1.200),tri:p('M12 2h14v14l-7 3V10h-8z',G)+r(2,11,15,15,O)+s('M2 11l15 15M12 11 26 2',B,1.300),dup:dia(14,22,4,G,1.600)+dia(21,17,4,G,1.600)+dia(16,13,4,G,1.600)+dia(7,16,4,O,1.600)+dia(7,11,4,O,1.600)+dia(14,8,3,O,1.600),collapse:r(3,3,22,22,'none',G)+s('M4 4l20 20M24 4 4 24',O,1.200)+r(12,12,5,5,B,O)+[3,25].map(a=>[3,25].map(b=>r(a-1.500,b-1.500,3,3,B,G)).join('')).join(''),remesh:c(18,11,9,O)+s('M9 11h18M18 2v18M11 5c4 4 4 8 0 12M25 5c-4 4-4 8 0 12',B,1.200)+r(2,13,14,14,G)+s('M6.500 13v14M11 13v14M2 18h14M2 22.500h14',B,1.200),
cut:s('M4 26V9l18-6',O,1.500)+p('M27 3 16 18 8 26 11 15 24 3z',G)+r(2,7,4,4,B,O)+r(19,1,4,4,B,O)+r(2,24,4,4,B,O),loopc:s('M3 3h22v22H3z',G,1.500,'stroke-dasharray="5 2"')+s('M14 3v22',O)+r(11,1,5,5,B,O)+r(11,22,5,5,B,O)+[3,25].map(a=>[3,25].map(b=>r(a-1.500,b-1.500,3,3,B,G)).join('')).join(''),quadd:s('M3 3h9v11H3z',G,1.500)+[3,12].map(a=>[3,14].map(b=>r(a-2,b-2,4,4,G)).join('')).join('')+r(1,22,4,4,O)+p('M27 5 15 23l-6 3 2-6L23 3z',G),
uv1:r(2,2,23,24,E)+chk(17,17),uv2:p('M3 3c7 4 15 4 22 0v22c-8 3-22 2-22-8z',E)+chk(17,17),uv3:p('M2 5c7-4 17-4 24 0 0 7-1 21-11 21S2 15 2 5z',E)+chk(17,17),uv4:p('M14 1l9 5-9 5-9-5zM2 9l9 5v13l-9-5zM25 9l-9 5v13l9-4z',E)+chk(17,17),uv5:s('M3 24c0-6 3-8 8-9s6-6 5-9 2-4 6-4M10 26c-1-5 2-6 6-8s7-5 6-10',E,3.500)+chk(18,17),uv6:r(2,2,24,24,E)+r(2,2,24,6,L)+s('M3 5h8','#333',2,'stroke-dasharray="2 1"')+r(7,10,14,14,'#333')+[[0,0],[8,0],[4,4],[0,8],[8,8]].map(a=>r(8+a[0],11+a[1],4,4,L)).join(''),uv7:s('M4 10l20 12M24 10 4 22',E,4)+p('M0 6h9l-7 8zM28 6h-9l7 8zM0 26h8l-6-7zM28 26h-8l6-7z',E)+chk(9,2),uv8:s('M2 3c2 8 1 18 10 23M12 3c16 0 13 8 8 12',E,1.500)+p('M2 1 7 4 25 27 20 24zM26 2 22 2 5 23 3 27 8 25z',L)
};
const pic=(n,z)=>I[n]?`<svg width="${z}" height="${z}" viewBox="0 0 24 24" aria-hidden="true">${I[n]}</svg>`:`<svg width="${z}" height="${z}" viewBox="0 0 28 28" aria-hidden="true">${K[n]}</svg>`;
const SZ={t23:20,t19:16,tool:30,tb:28,lt:16};
document.querySelectorAll('[data-i]').forEach(e=>e.innerHTML=pic(e.dataset.i,e.dataset.s));
document.querySelectorAll('[data-row]').forEach(e=>{
  const [k,l]=e.dataset.row.split(':');
  e.innerHTML=l.split(',').map(n=>{
    const m=n.match(/^(\w+)([*!]?)$/);
    const on=m[2]==='*'?(k==='tb'?'cur':'on'):m[2]==='!'?'press':/^x(ray|joint)/.test(n)?'dk':'';
    return `<button class="${k==='lt'?'t23':k} ${on}" aria-label="${m[1]}">${pic(m[1],m[1]==='cortana'||m[1]==='task'?25:SZ[k])}</button>`}).join('');
});
document.getElementById('shelf').innerHTML='sphere,cube,cyl,cone,torus,plane,disc+,|,platonic+,|,star+,type,svg,|,xf,hist,freeze,|,comb,sepa,mirror,smooth,reduce,extr,bridge,bevel,conn,quad,tri,dup,collapse,remesh+,|,cut,loopc,quadd,|,uv1,uv2,uv3,uv4,uv5,uv6+,uv7,uv8+'.split(',').map(n=>n==='|'?'<span class="ssep"></span>':`<button class="cell ${n.endsWith('+')?'brk':''}" aria-label="${n.replace('+','')}">${pic(n.replace('+',''),27)}</button>`).join('');
// Options corner on the two shelf buttons that open a flyout
for(const n of ['platonic','star']){document.querySelector(`[aria-label=${n}] svg`).insertAdjacentHTML('beforeend',p('M28 22v6h-6z',L))}
document.getElementById('tree').innerHTML='-c persp,-c top,c front,-c side,m head_geo,m R_hand_geo,m L_hand_geo,m pants_geo,m R_leg_geo,m L_leg_geo,m R_boots_geo,m L_boots_geo,m pPlane1,m pPlane2,m pPlane3,m pPlane4,c persp1,g group1,m pPlane5,m pPlane6,m pPlane7,m pPlane8,m polySurface1,m polySurface2,m polySurface3,m polySurface4,m polySurface5,m polySurface6,g pSphere5,g eye_R_grp,g eye_L_grp,-m raincoat_geo,g pCylinder2'.split(',').map(v=>{
  const [k,n]=v.split(' '),q=k.replace('-','');
  return `<li class="${k[0]==='-'?'off':''}"><span class="xp">${q==='g'?pic('plus',10):''}</span><span class="ticon">${pic({c:'camI',m:'meshI',g:'grpI'}[q],16)}</span>${n}</li>`}).join('');
// 121.2 frames span the time slider; frame 1 sits 0.66 frame in
const at=f=>((f-.34)/121.2*100).toFixed(3)+'%';
let h='';for(let f=5;f<=120;f+=5)h+=`<i class="tick" style="left:${at(f)}"></i><span class="tlab" style="left:${at(f)}">${f}</span>`;
document.getElementById('times').innerHTML=h+`<span class="now" style="left:${at(88)}">88</span>`;
</script>
<script src="https://cdn.jsdelivr.net/npm/bootstrap@5.3.0/dist/js/bootstrap.bundle.min.js"></script>
</body>
</html>
